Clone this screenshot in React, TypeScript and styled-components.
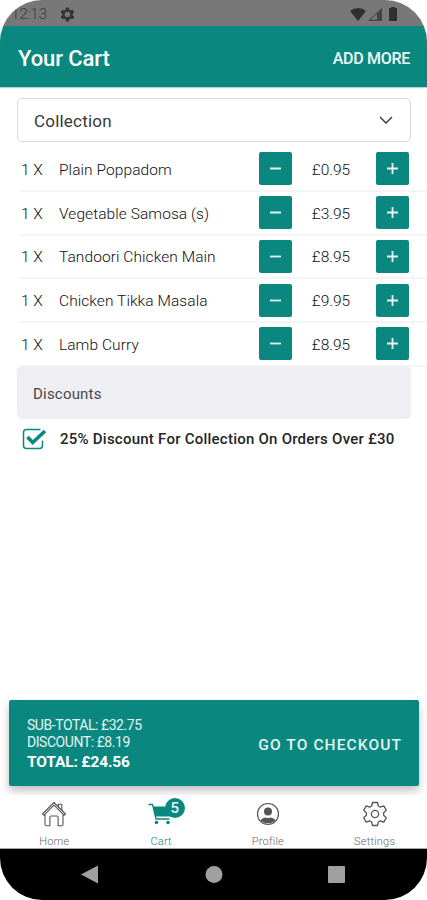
import React from "react";
import styled, { createGlobalStyle } from "styled-components";

const teal = "#0a877f";

const Global = createGlobalStyle`
  * { box-sizing: border-box; }
  body { margin: 0; background: #fff; font-family: Roboto, sans-serif; }
  button { font: inherit; border: 0; padding: 0; background: none; }
  svg { display: block; flex: none; }
`;

const Screen = styled.div`
  width: 427px;
  height: 900px;
  display: flex;
  flex-direction: column;
  overflow: hidden;
  border-radius: 42px;
  background: #fff;
`;

const StatusBar = styled.div`
  height: 26px;
  flex: none;
  display: flex;
  align-items: center;
  padding: 2px 26px 0 11px;
  background: #787878;
  color: #3c3c3c;
  font-size: 15.5px;
  font-weight: 300;
  letter-spacing: -0.4px;
`;

const StatusIcons = styled.div`
  margin-left: auto;
  display: flex;
  align-items: center;
  gap: 2px;
`;

const StatusGear = styled.svg`
  margin-left: 13px;
`;

const Header = styled.header`
  height: 61px;
  flex: none;
  display: flex;
  align-items: center;
  justify-content: space-between;
  padding: 3px 17px 0 18px;
  background: ${teal};
  color: #fff;
  box-shadow: 0 1px 1px #b4d5d2;
`;

const Title = styled.h1`
  margin: 0;
  font-size: 22px;
  font-weight: 500;
  letter-spacing: -0.1px;
`;

const AddMore = styled.button`
  color: #eefafa;
  font-size: 16px;
  font-weight: 500;
  letter-spacing: -0.3px;
`;

const Select = styled.div`
  height: 44px;
  flex: none;
  margin: 11px 16px 6px 17px;
  padding: 2px 17px 0 16px;
  display: flex;
  align-items: center;
  justify-content: space-between;
  border: 1px solid #d9d9d9;
  border-radius: 5px;
  color: #383838;
  font-size: 17px;
  letter-spacing: 0.2px;
`;

const Items = styled.ul`
  list-style: none;
  margin: 0;
  padding: 0 0 0 20px;
`;

const Item = styled.li`
  height: 43.75px;
  display: grid;
  grid-template-columns: 39px 200px 33px 84px 33px;
  align-items: center;
  border-bottom: 2px solid #f5f5f5;
  color: #101010;
  font-size: 15.5px;
  font-weight: 300;
`;

const Quantity = styled.span`
  padding: 2px 0 0 1px;
`;

const Name = styled.span`
  padding-top: 2px;
  letter-spacing: 0.07px;
  white-space: nowrap;
`;

const Price = styled.span`
  padding: 2px 6px 0 0;
  text-align: center;
`;

const Step = styled.button`
  width: 33px;
  height: 33px;
  display: grid;
  place-items: center;
  border-radius: 2px;
  background: ${teal};
`;

const DiscountHeading = styled.div`
  height: 53px;
  flex: none;
  margin: -1px 16px 0 17px;
  padding: 3px 16px 0;
  display: flex;
  align-items: center;
  border-radius: 5px;
  background: #efeef3;
  color: #484848;
  font-size: 15px;
  letter-spacing: 0.2px;
`;

const Offer = styled.label`
  height: 38px;
  display: flex;
  align-items: center;
  gap: 13px;
  padding: 2px 0 0 22px;
  color: #252525;
  font-size: 15px;
  font-weight: 500;
  letter-spacing: 0.24px;
  white-space: nowrap;
`;

const CheckoutArea = styled.div`
  height: 109px;
  flex: none;
  margin-top: auto;
  padding: 14px 8px 0 9px;
  overflow: hidden;
`;

const Checkout = styled.div`
  height: 86px;
  display: flex;
  align-items: center;
  justify-content: space-between;
  padding: 2px 17px 0 18px;
  border-radius: 2px;
  background: ${teal};
  color: #e4f3f2;
  box-shadow: 0 3px 6px rgba(30, 20, 35, 0.16), 0 8px 12px rgba(30, 20, 35, 0.12);
`;

const Totals = styled.div`
  display: flex;
  flex-direction: column;
`;

const Amount = styled.span<{ $total?: boolean }>`
  height: ${(p) => (p.$total ? 20 : 17.5)}px;
  line-height: ${(p) => (p.$total ? 21 : 17.5)}px;
  font-size: ${(p) => (p.$total ? 15.5 : 14)}px;
  font-weight: ${(p) => (p.$total ? 700 : 400)};
  color: ${(p) => (p.$total ? "#fff" : "#e4f3f2")};
  letter-spacing: ${(p) => (p.$total ? -0.15 : -0.45)}px;
`;

const CheckoutAction = styled.button`
  color: inherit;
  font-size: 15.5px;
  font-weight: 500;
  letter-spacing: 1.1px;
  padding-top: 1px;
`;

const Tabs = styled.nav`
  height: 54px;
  flex: none;
  display: grid;
  grid-template-columns: repeat(4, 1fr);
  background: #fff;
  border-bottom: 1px solid #aaa;
`;

const Tab = styled.div<{ $active?: boolean }>`
  position: relative;
  display: flex;
  flex-direction: column;
  align-items: center;
  padding: 6px 0 0 2px;
  gap: 8px;
  color: ${(p) => (p.$active ? teal : "#555")};
`;

const TabLabel = styled.span<{ $active?: boolean }>`
  color: ${(p) => (p.$active ? teal : "#666")};
  font-size: 11px;
  font-weight: 300;
  line-height: 14px;
  letter-spacing: 0.2px;
`;

const Badge = styled.span`
  position: absolute;
  top: 3px;
  left: 58px;
  width: 20px;
  height: 20px;
  border-radius: 50%;
  background: ${teal};
  color: #e8f6f5;
  font-size: 15px;
  font-weight: 500;
  line-height: 20px;
  text-align: center;
`;

const SystemBar = styled.div`
  height: 51px;
  flex: none;
  padding-left: 81px;
  display: flex;
  align-items: center;
  background: #000;
`;

const SystemIcons = styled.svg`
  fill: #a0a0a0;
`;

const items = [
  { name: "Plain Poppadom", price: "£0.95" },
  { name: "Vegetable Samosa (s)", price: "£3.95" },
  { name: "Tandoori Chicken Main", price: "£8.95" },
  { name: "Chicken Tikka Masala", price: "£9.95" },
  { name: "Lamb Curry", price: "£8.95" },
];

const Sign = ({ plus = false }: { plus?: boolean }) => (
  <svg width="13" height="13" viewBox="0 0 13 13" stroke="#e6f5f3" strokeWidth="1.8">
    <path d={plus ? "M1 6.5h11M6.5 1v11" : "M1 6.5h11"} />
  </svg>
);

const gearPath =
  "M19.4 13a7.5 7.5 0 0 0 0-2l2.1-1.6-2-3.5-2.5 1a8 8 0 0 0-1.7-1L14.9 3h-4l-.4 2.9a8 8 0 0 0-1.7 1l-2.5-1-2 3.5L6.4 11a7.5 7.5 0 0 0 0 2l-2.1 1.6 2 3.5 2.5-1a8 8 0 0 0 1.7 1l.4 2.9h4l.4-2.9a8 8 0 0 0 1.7-1l2.5 1 2-3.5z";

const HomeIcon = () => (
  <svg width="26" height="26" viewBox="0 0 26 26" fill="none" stroke="currentColor" strokeWidth="1.1" strokeLinejoin="round" strokeLinecap="round">
    <path d="M1.500 13 13 1.500 24.500 13 23 14.200 13 4.200 3 14.200zM17.500 5V3.300h3.300v5.500M4 13.500v9.700q0 1.500 1.500 1.500h3.400v-8.500q0-1.200 1.200-1.200h5.800q1.200 0 1.200 1.200v8.500h3.400q1.500 0 1.500-1.500v-9.700" />
  </svg>
);

const CartIcon = () => (
  <svg width="26" height="26" viewBox="0 0 26 26" fill="none" stroke="currentColor">
    <path d="M.5 3.500h4l3.500 14.500h13.500" strokeWidth="1.300" />
    <path d="M5 5.500h20l-3 10H7.500z" fill="currentColor" stroke="none" />
    <circle cx="8.500" cy="21.500" r="1.800" fill="currentColor" stroke="none" />
    <circle cx="20" cy="21.500" r="1.800" fill="currentColor" stroke="none" />
  </svg>
);

const ProfileIcon = () => (
  <svg width="26" height="26" viewBox="0 0 26 26" fill="currentColor">
    <circle cx="13" cy="13" r="10.500" fill="none" stroke="currentColor" strokeWidth="1.200" />
    <circle cx="13" cy="10.500" r="4" />
    <path d="M5.500 19.200q2-2.600 5-2.700 2.500 1 5 0 3 .1 5 2.700a10.500 10.500 0 0 1-15 0z" />
  </svg>
);

const SettingsIcon = () => (
  <svg width="26" height="26" viewBox="0 0 26 26" fill="none" stroke="currentColor" strokeWidth="1.300" strokeLinejoin="round">
    <path d="M10.500 1.500h5l.8 3.500 2 1.200 3.500-1.300 2.500 4.400-2.700 2.400v2.600l2.700 2.400-2.500 4.400-3.500-1.300-2 1.200-.8 3.500h-5l-.8-3.500-2-1.200-3.500 1.300-2.500-4.400 2.700-2.400v-2.600L1.700 9.300l2.500-4.400 3.500 1.300 2-1.200z" />
    <circle cx="13" cy="13" r="3.600" />
  </svg>
);

export default function App() {
  return (
    <>
      <Global />
      <Screen>
        <StatusBar>
          12:13
          <StatusGear width="15" height="15" viewBox="3.500 2.500 19 19" fill="#333" fillRule="evenodd">
            <path d={gearPath + "M12.900 8.500a3.500 3.500 0 1 0 0 7 3.500 3.500 0 0 0 0-7z"} />
          </StatusGear>
          <StatusIcons>
            <svg width="16" height="13" viewBox="0 0 16 13" fill="#303030">
              <path d="M0 3Q8-3 16 3L8 13z" />
            </svg>
            <svg width="14" height="13" viewBox="0 0 14 13" fill="#444">
              <path fillRule="evenodd" d="M0 13 14 0v13zM2.500 11.800H9V5.800z" />
            </svg>
            <svg width="17" height="14" viewBox="0 0 17 14" fill="#303030">
              <path d="M5 1h2V0h4v1h2v13H5z" />
            </svg>
          </StatusIcons>
        </StatusBar>
        <Header>
          <Title>Your Cart</Title>
          <AddMore>ADD MORE</AddMore>
        </Header>
        <Select>
          Collection
          <svg width="14" height="10" viewBox="0 0 14 10" fill="none" stroke="#333" strokeWidth="1.300">
            <path d="m1 1 6 6 6-6" />
          </svg>
        </Select>
        <Items>
          {items.map((item) => (
            <Item key={item.name}>
              <Quantity>1 X</Quantity>
              <Name>{item.name}</Name>
              <Step aria-label="Remove one"><Sign /></Step>
              <Price>{item.price}</Price>
              <Step aria-label="Add one"><Sign plus /></Step>
            </Item>
          ))}
        </Items>
        <DiscountHeading>Discounts</DiscountHeading>
        <Offer>
          <svg width="25" height="22" viewBox="0 0 25 22" fill="none" stroke={teal}>
            <path d="M18.500 1.500h-14q-3 0-3 3v13q0 3 3 3h13q3 0 3-3v-5" strokeWidth="1.500" />
            <path d="m5.500 9 5.200 5.500L23 3" strokeWidth="3.600" />
          </svg>
          25% Discount For Collection On Orders Over £30
        </Offer>
        <CheckoutArea>
          <Checkout>
            <Totals>
              <Amount>SUB-TOTAL: £32.75</Amount>
              <Amount>DISCOUNT: £8.19</Amount>
              <Amount $total>TOTAL: £24.56</Amount>
            </Totals>
            <CheckoutAction>GO TO CHECKOUT</CheckoutAction>
          </Checkout>
        </CheckoutArea>
        <Tabs>
          <Tab><HomeIcon /><TabLabel>Home</TabLabel></Tab>
          <Tab $active><CartIcon /><Badge>5</Badge><TabLabel $active>Cart</TabLabel></Tab>
          <Tab><ProfileIcon /><TabLabel>Profile</TabLabel></Tab>
          <Tab><SettingsIcon /><TabLabel>Settings</TabLabel></Tab>
        </Tabs>
        <SystemBar>
          <SystemIcons width="264" height="20" viewBox="0 0 264 20">
            <path d="M0 9.500 17 .5v18z" />
            <circle cx="133" cy="9.500" r="8.500" />
            <rect x="247" y="1" width="17" height="17" rx="1" />
          </SystemIcons>
        </SystemBar>
      </Screen>
    </>
  );
}
